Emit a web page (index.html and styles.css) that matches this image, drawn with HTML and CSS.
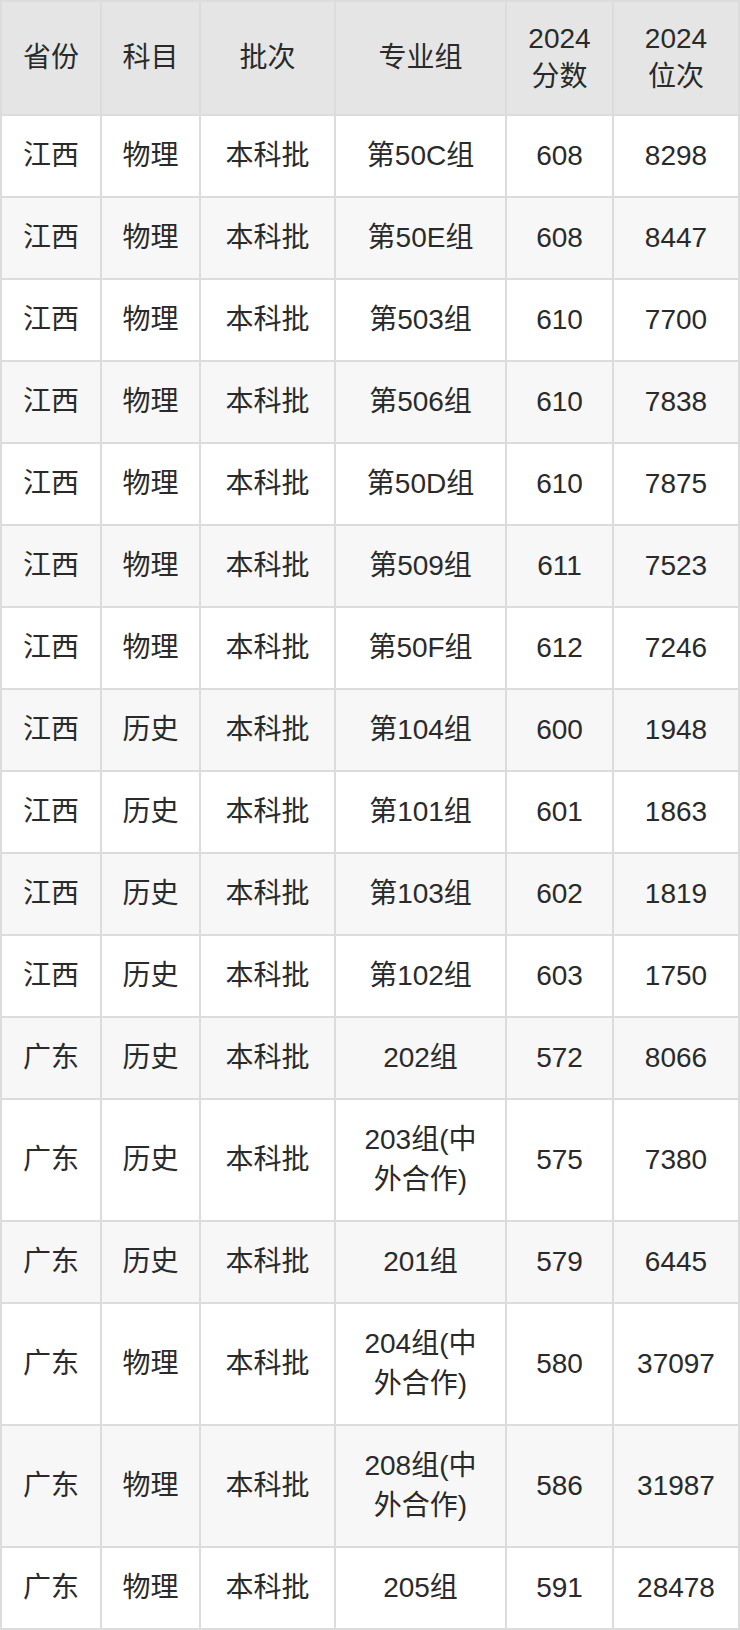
FILE: index.html
```html
<!DOCTYPE html>
<html lang="zh-CN">
<head>
<meta charset="utf-8">
<title>录取分数</title>
<link rel="stylesheet" href="styles.css">
</head>
<body>
<div class="table">
  <div class="row head">
    <div class="cell">省份</div>
    <div class="cell">科目</div>
    <div class="cell">批次</div>
    <div class="cell">专业组</div>
    <div class="cell">2024<br>分数</div>
    <div class="cell">2024<br>位次</div>
  </div>
  <div class="row"><div class="cell">江西</div><div class="cell">物理</div><div class="cell">本科批</div><div class="cell">第50C组</div><div class="cell">608</div><div class="cell">8298</div></div>
  <div class="row"><div class="cell">江西</div><div class="cell">物理</div><div class="cell">本科批</div><div class="cell">第50E组</div><div class="cell">608</div><div class="cell">8447</div></div>
  <div class="row"><div class="cell">江西</div><div class="cell">物理</div><div class="cell">本科批</div><div class="cell">第503组</div><div class="cell">610</div><div class="cell">7700</div></div>
  <div class="row"><div class="cell">江西</div><div class="cell">物理</div><div class="cell">本科批</div><div class="cell">第506组</div><div class="cell">610</div><div class="cell">7838</div></div>
  <div class="row"><div class="cell">江西</div><div class="cell">物理</div><div class="cell">本科批</div><div class="cell">第50D组</div><div class="cell">610</div><div class="cell">7875</div></div>
  <div class="row"><div class="cell">江西</div><div class="cell">物理</div><div class="cell">本科批</div><div class="cell">第509组</div><div class="cell">611</div><div class="cell">7523</div></div>
  <div class="row"><div class="cell">江西</div><div class="cell">物理</div><div class="cell">本科批</div><div class="cell">第50F组</div><div class="cell">612</div><div class="cell">7246</div></div>
  <div class="row"><div class="cell">江西</div><div class="cell">历史</div><div class="cell">本科批</div><div class="cell">第104组</div><div class="cell">600</div><div class="cell">1948</div></div>
  <div class="row"><div class="cell">江西</div><div class="cell">历史</div><div class="cell">本科批</div><div class="cell">第101组</div><div class="cell">601</div><div class="cell">1863</div></div>
  <div class="row"><div class="cell">江西</div><div class="cell">历史</div><div class="cell">本科批</div><div class="cell">第103组</div><div class="cell">602</div><div class="cell">1819</div></div>
  <div class="row"><div class="cell">江西</div><div class="cell">历史</div><div class="cell">本科批</div><div class="cell">第102组</div><div class="cell">603</div><div class="cell">1750</div></div>
  <div class="row"><div class="cell">广东</div><div class="cell">历史</div><div class="cell">本科批</div><div class="cell">202组</div><div class="cell">572</div><div class="cell">8066</div></div>
  <div class="row"><div class="cell">广东</div><div class="cell">历史</div><div class="cell">本科批</div><div class="cell">203组(中外合作)</div><div class="cell">575</div><div class="cell">7380</div></div>
  <div class="row"><div class="cell">广东</div><div class="cell">历史</div><div class="cell">本科批</div><div class="cell">201组</div><div class="cell">579</div><div class="cell">6445</div></div>
  <div class="row"><div class="cell">广东</div><div class="cell">物理</div><div class="cell">本科批</div><div class="cell">204组(中外合作)</div><div class="cell">580</div><div class="cell">37097</div></div>
  <div class="row"><div class="cell">广东</div><div class="cell">物理</div><div class="cell">本科批</div><div class="cell">208组(中外合作)</div><div class="cell">586</div><div class="cell">31987</div></div>
  <div class="row"><div class="cell">广东</div><div class="cell">物理</div><div class="cell">本科批</div><div class="cell">205组</div><div class="cell">591</div><div class="cell">28478</div></div>
</div>
</body>
</html>
```

FILE: styles.css
```css
html, body {
  margin: 0;
  padding: 0;
  background: #ffffff;
}

.table {
  display: grid;
  grid-template-columns: 98px 97px 133px 169px 105px 124px;
  gap: 2px;
  padding: 2px;
  width: 740px;
  box-sizing: border-box;
  background: #dcdcdc;
  font-family: "Liberation Sans", "Noto Sans CJK SC", sans-serif;
  font-size: 28px;
  color: #2a2a2a;
}

.row {
  display: contents;
}

.cell {
  display: flex;
  align-items: center;
  justify-content: center;
  text-align: center;
  padding: 20px 18px;
  line-height: 40px;
  background: #ffffff;
  word-break: break-all;
}

.row:nth-child(odd) .cell {
  background: #f7f7f7;
}

.head .cell,
.row.head .cell {
  background: #e5e5e5;
  padding: 18px 10px;
  line-height: 38px;
}
```
